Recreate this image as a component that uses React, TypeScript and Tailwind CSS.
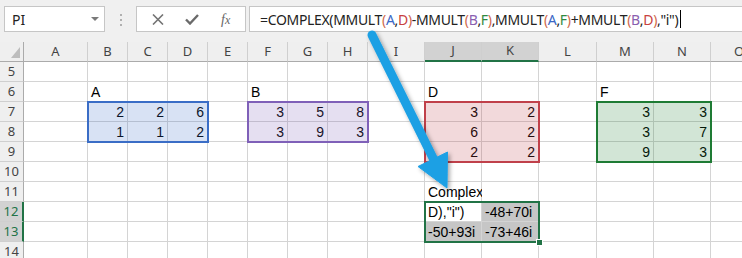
import { Fragment } from "react";

const COLUMNS = ["A", "B", "C", "D", "E", "F", "G", "H", "I", "J", "K", "L", "M", "N", "O"];
const ROWS = [5, 6, 7, 8, 9, 10, 11, 12, 13, 14];

const GRID =
  "grid grid-cols-[24px_64px_40px_40px_40px_40px_40px_40px_40px_57px_57px_57px_58px_57px_57px_57px] grid-rows-[20px_20px_20px_20px_20px_20px_20px_20px_20px_20px_20px]";

type Cell = { v: string; num?: boolean };

const CELLS: Record<string, Cell> = {
  B6: { v: "A" },
  F6: { v: "B" },
  J6: { v: "D" },
  M6: { v: "F" },
  B7: { v: "2", num: true },
  C7: { v: "2", num: true },
  D7: { v: "6", num: true },
  B8: { v: "1", num: true },
  C8: { v: "1", num: true },
  D8: { v: "2", num: true },
  F7: { v: "3", num: true },
  G7: { v: "5", num: true },
  H7: { v: "8", num: true },
  F8: { v: "3", num: true },
  G8: { v: "9", num: true },
  H8: { v: "3", num: true },
  J7: { v: "3", num: true },
  K7: { v: "2", num: true },
  J8: { v: "6", num: true },
  K8: { v: "2", num: true },
  J9: { v: "2", num: true },
  K9: { v: "2", num: true },
  M7: { v: "3", num: true },
  N7: { v: "3", num: true },
  M8: { v: "3", num: true },
  N8: { v: "7", num: true },
  M9: { v: "9", num: true },
  N9: { v: "3", num: true },
  J11: { v: "Complex" },
  J12: { v: 'D),"i")' },
  K12: { v: "-48+70i" },
  J13: { v: "-50+93i" },
  K13: { v: "-73+46i" },
};

const SELECTED = ["K12", "J13", "K13"];

const P = "text-[#d0694c]";
const A = "text-[#3b68c6]";
const D = "text-[#c8413f]";
const B = "text-[#8a5fb0]";
const F = "text-[#2f8a40]";

const FormulaBar = () => (
  <div className="flex h-[42px] items-start bg-[#f0f0f0] pt-[6px]">
    <div className="ml-[4px] flex h-[26px] w-[101px] items-center justify-between border border-[#c6c6c6] bg-white pl-[7px] pr-[5px] text-[14px] text-[#222]">
      <span>PI</span>
      <svg width="8" height="4" viewBox="0 0 8 4">
        <path d="M0 0h8L4 4z" fill="#7a7a7a" />
      </svg>
    </div>
    <div className="flex w-[31px] flex-col items-center gap-[3px] pt-[8px]">
      <span className="h-[2px] w-[2px] bg-[#b0b0b0]" />
      <span className="h-[2px] w-[2px] bg-[#b0b0b0]" />
      <span className="h-[2px] w-[2px] bg-[#b0b0b0]" />
    </div>
    <div className="flex h-[26px] w-[110px] items-center justify-around border border-[#c6c6c6] bg-white px-[4px]">
      <svg width="12" height="11" viewBox="0 0 12 11">
        <path d="M1 0.5l10 10M11 0.5l-10 10" stroke="#747474" strokeWidth="1.6" />
      </svg>
      <svg width="14" height="11" viewBox="0 0 14 11">
        <path d="M1 5.5l4 4 8-8.5" stroke="#6a6a6a" strokeWidth="2.4" fill="none" />
      </svg>
      <span className="font-['Liberation_Serif',serif] text-[14px] italic text-[#666]">
        f<span className="text-[12px]">x</span>
      </span>
    </div>
    <div className="ml-[3px] flex h-[26px] flex-1 items-center border border-r-0 border-[#c6c6c6] bg-white pl-[10px] text-[14px] tracking-[-0.33px] text-[#222] whitespace-nowrap">
      <span>=COMPLEX(MMULT</span>
      <span className={P}>(</span>
      <span className={A}>A</span>,<span className={D}>D</span>
      <span className={P}>)</span>
      <span>-MMULT</span>
      <span className={P}>(</span>
      <span className={B}>B</span>,<span className={F}>F</span>
      <span className={P}>)</span>
      <span>,MMULT</span>
      <span className={P}>(</span>
      <span className={A}>A</span>,<span className={F}>F</span>
      <span className={P}>)</span>
      <span>+MMULT</span>
      <span className={P}>(</span>
      <span className={B}>B</span>,<span className={D}>D</span>
      <span className={P}>)</span>
      <span>,"i")</span>
      <span className="ml-[2px] h-[18px] w-[1px] bg-black" />
    </div>
  </div>
);

const Sheet = () => (
  <div className={`${GRID} relative`}>
    <div className="flex items-end justify-end border-r border-b border-r-[#ababab] border-b-[#ababab] bg-[#efefef] p-[3px]">
      <svg width="9" height="11" viewBox="0 0 9 11">
        <path d="M9 0v11H0z" fill="#bdbdbd" />
      </svg>
    </div>
    {COLUMNS.map((c) => {
      const sel = c === "J" || c === "K";
      return (
        <div
          key={c}
          className={`flex items-center justify-center border-r border-r-[#cfcfcf] font-['Noto_Sans',sans-serif] text-[13px] text-[#444] ${
            sel ? "border-b-2 border-b-[#217346] bg-[#d2d2d2] text-[#1e4d33]" : "border-b border-b-[#ababab] bg-[#efefef]"
          }`}
        >
          {c}
        </div>
      );
    })}
    {ROWS.map((r) => {
      const sel = r === 12 || r === 13;
      return (
        <Fragment key={r}>
          <div
            className={`flex items-center justify-center border-b border-b-[#cfcfcf] font-['Noto_Sans',sans-serif] text-[13px] ${
              sel
                ? "border-r-2 border-r-[#217346] bg-[#d2d2d2] text-[#217346]"
                : "border-r border-r-[#ababab] bg-[#efefef] text-[#444]"
            }`}
          >
            {r}
          </div>
          {COLUMNS.map((c) => {
            const id = `${c}${r}`;
            const cell = CELLS[id];
            const gray = SELECTED.includes(id);
            return (
              <div
                key={id}
                className={`flex items-end whitespace-nowrap border-r border-b border-[#d4d4d4] pb-[2px] text-[14px] leading-[14px] ${
                  cell?.num ? "justify-end pr-[3px]" : "justify-start pl-[3px]"
                } ${gray ? "bg-[#c6c6c6]" : "bg-white"}`}
              >
                {cell?.v}
              </div>
            );
          })}
        </Fragment>
      );
    })}

    {/* range highlights drawn over the cells while the formula is edited */}
    <div className={`${GRID} pointer-events-none absolute inset-0`}>
      <div className="col-start-3 col-span-3 row-start-4 row-span-2 -m-px border-2 border-[#3a6dc6] bg-[#3a6dc6]/20" />
      <div className="col-start-7 col-span-3 row-start-4 row-span-2 -m-px border-2 border-[#7f60b8] bg-[#7f60b8]/20" />
      <div className="col-start-11 col-span-2 row-start-4 row-span-3 -m-px border-2 border-[#c0404a] bg-[#c0404a]/20" />
      <div className="col-start-14 col-span-2 row-start-4 row-span-3 -m-px border-2 border-[#1e7b34] bg-[#1e7b34]/20" />
      <div className="relative col-start-11 col-span-2 row-start-9 row-span-2 -m-px border-2 border-[#217346]">
        <span className="absolute -right-[5px] -bottom-[5px] h-[7px] w-[7px] border border-white bg-[#217346]" />
      </div>
    </div>
  </div>
);

const Arrow = () => (
  <svg className="pointer-events-none absolute left-0 top-0" width="742" height="258" viewBox="0 0 742 258">
    <defs>
      <filter id="sh" x="-20%" y="-20%" width="140%" height="140%">
        <feDropShadow dx="2" dy="2" stdDeviation="2" floodColor="#000" floodOpacity="0.35" />
      </filter>
    </defs>
    <g filter="url(#sh)" fill="#1fa0e4" stroke="#1fa0e4">
      <path d="M372 35L434 160" strokeWidth="9" strokeLinecap="round" fill="none" />
      <path d="M418 166.5L447.5 152L447 188z" strokeWidth="1" strokeLinejoin="round" />
    </g>
  </svg>
);

export default function App() {
  return (
    <div className="relative h-[258px] w-[742px] overflow-hidden bg-white font-['Liberation_Sans',Arial,sans-serif] text-black">
      <div className="font-['Noto_Sans',sans-serif]">
        <FormulaBar />
      </div>
      <Sheet />
      <Arrow />
    </div>
  );
}
